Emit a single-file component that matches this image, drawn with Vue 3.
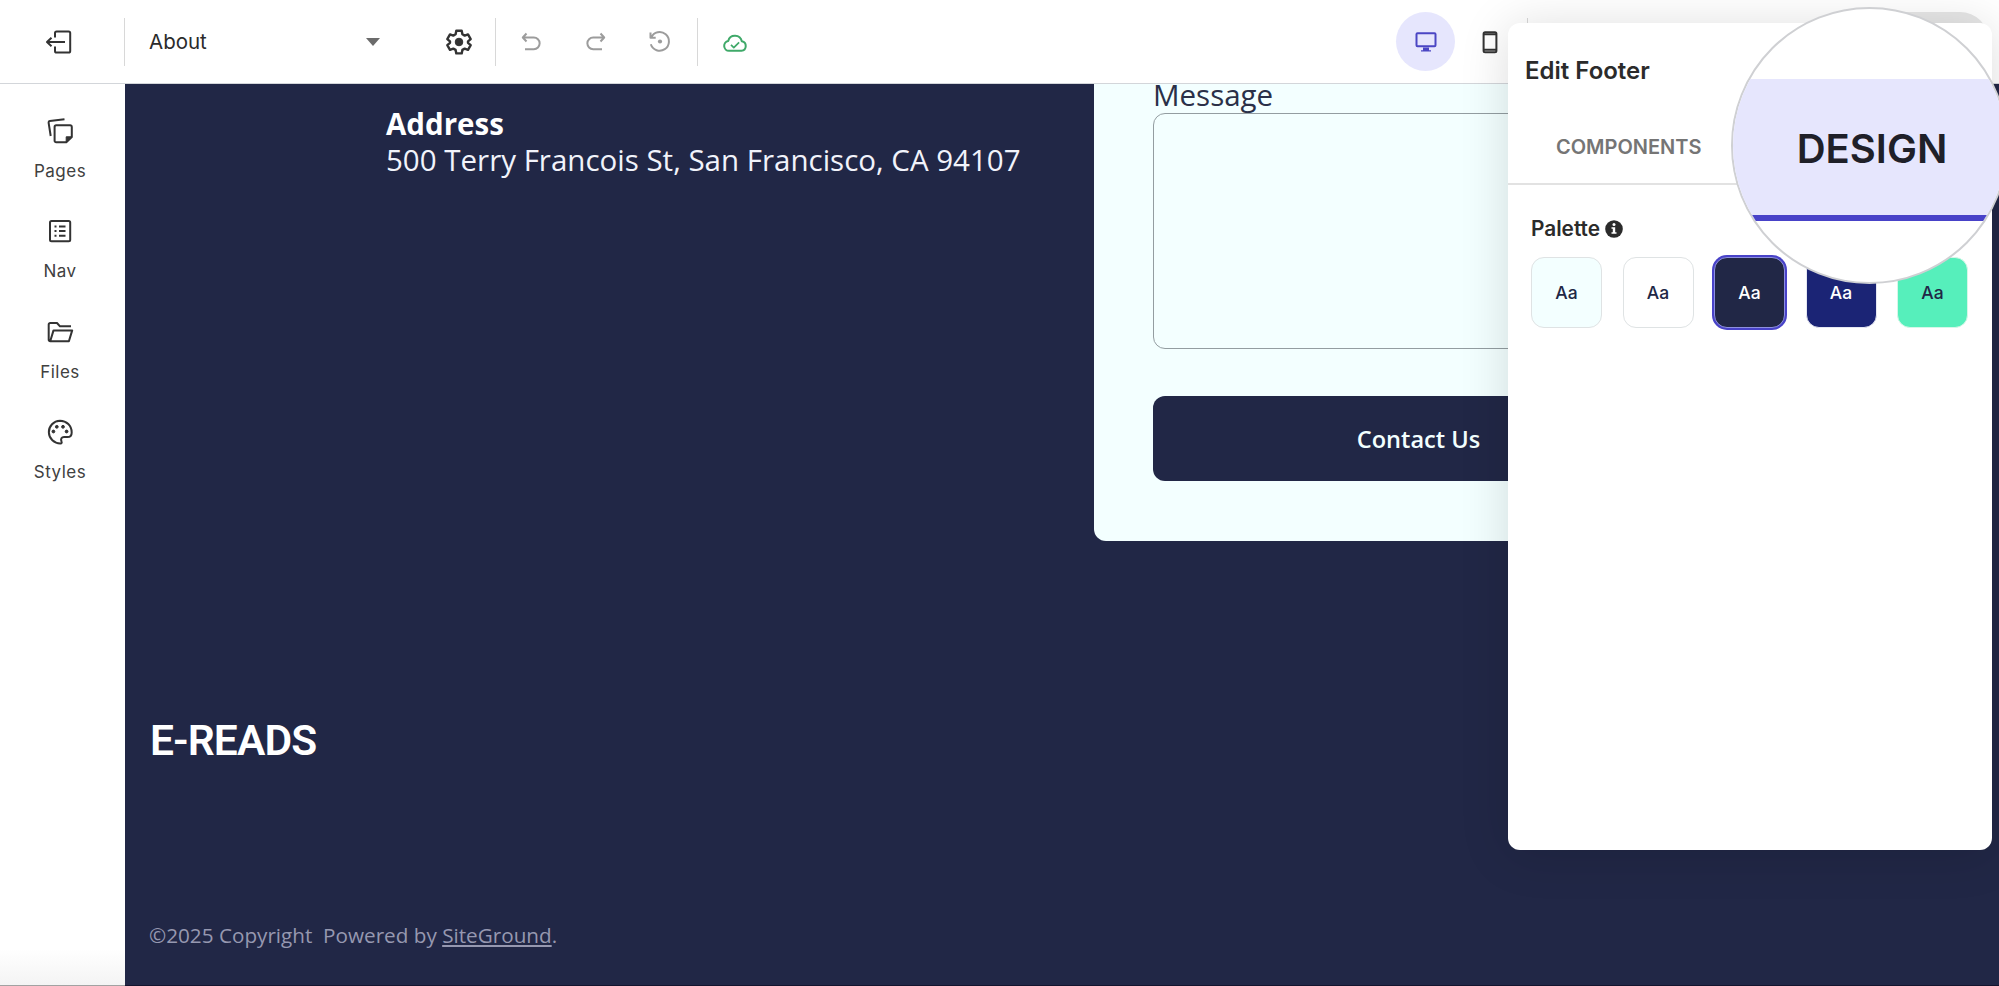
<script setup>
import { ref } from "vue";

const sidebarItems = [
  { id: "pages", label: "Pages" },
  { id: "nav", label: "Nav" },
  { id: "files", label: "Files" },
  { id: "styles", label: "Styles" },
];

const palette = ["mint", "white", "navy", "blue", "green"];
const selected = ref("navy");
const page = ref("About");
</script>

<template>
  <div class="editor">
    <header class="toolbar">
      <button class="tool exit">
        <svg viewBox="0 0 28 28" class="icon">
          <path d="M10 9.5V5a1.6 1.6 0 0 1 1.6-1.6h12A1.6 1.6 0 0 1 25.200 5v18a1.600 1.600 0 0 1-1.600 1.600h-12A1.600 1.600 0 0 1 10 23v-4.500M20 14H2.500M6.500 9.800 2 14l4.500 4.200" />
        </svg>
      </button>
      <span class="divider" />
      <button class="page-select">
        {{ page }}
        <span class="caret" />
      </button>
      <button class="tool settings">
        <svg viewBox="0 0 28 28" class="icon">
          <path d="m11.300 2.800-.7 3.500-2.300 1.300-3.300-1.200-2.700 4.700 2.700 2.300v1.400l-2.700 2.300 2.700 4.700 3.300-1.200 2.300 1.300.7 3.500h5.400l.7-3.500 2.300-1.300 3.300 1.200 2.700-4.700-2.700-2.300v-1.400l2.700-2.300-2.700-4.700-3.300 1.200-2.300-1.300-.7-3.500z" />
          <circle cx="14" cy="14" r="3.800" class="solid" />
        </svg>
      </button>
      <span class="divider" />
      <div class="history">
        <button class="tool">
          <svg viewBox="0 0 28 28" class="icon muted">
            <path d="M9.500 5.500 5.800 9.500l3.700 4M6.500 9.500h10.300a5.300 5.300 0 0 1 0 11.700H8" />
          </svg>
        </button>
        <button class="tool">
          <svg viewBox="0 0 28 28" class="icon muted">
            <path d="m18.500 5.500 3.700 4-3.700 4M21.500 9.500H11.200a5.300 5.300 0 0 0 0 11.700H20" />
          </svg>
        </button>
        <button class="tool">
          <svg viewBox="0 0 28 28" class="icon muted">
            <path d="M4.500 4.500v5.200h5.200M5.200 9.500a9.300 9.300 0 1 1-.4 6.800" />
            <circle cx="14" cy="13.500" r="2.100" class="solid" />
          </svg>
        </button>
      </div>
      <span class="divider" />
      <button class="tool saved">
        <svg viewBox="0 0 28 28" class="icon success">
          <path d="M8 22.800a5 5 0 0 1-.8-9.900 7 7 0 0 1 13.600.4 4.800 4.800 0 0 1-.4 9.500z" />
          <path d="m10 16.800 2.800 2.800 5.300-5.200" class="thin" />
        </svg>
      </button>
      <button class="tool device device-active">
        <svg viewBox="0 0 28 28" class="icon accent">
          <rect x="4.500" y="5.300" width="19" height="13" rx="1" />
          <path d="M11 19.500h6v2.800h2v1.200H9v-1.200h2z" class="solid" />
        </svg>
      </button>
      <button class="tool phone">
        <svg viewBox="0 0 28 28" class="icon">
          <rect x="7.600" y="4.200" width="12.800" height="20" rx="1.500" />
          <path d="M7.600 6.200h12.800M7.600 21.700h12.800" />
        </svg>
      </button>
      <span class="divider divider-last" />
      <button class="publish" aria-label="Publish" />
    </header>

    <div class="workspace">
      <nav class="sidebar">
        <a v-for="item in sidebarItems" :key="item.id" class="sidebar-item">
          <svg viewBox="0 0 28 28" class="icon">
            <template v-if="item.id === 'pages'">
              <path d="M4.700 19 2.600 5.600a1.400 1.400 0 0 1 1.200-1.500L18.500 2.300" />
              <path d="M10.200 8.300h14a1.600 1.600 0 0 1 1.600 1.600v10.200l-5.500 5.200H10.200a1.600 1.600 0 0 1-1.600-1.600V9.900a1.600 1.600 0 0 1 1.600-1.600z" />
              <path d="M25.800 19.800h-5.600v5.600z" class="solid" />
            </template>
            <template v-else-if="item.id === 'nav'">
              <rect x="4" y="4" width="20.200" height="20.200" rx="1.500" />
              <path d="M13 9.500h6.500M13 14.100h6.500M13 18.700h6.500M8.500 9.500h2M8.500 14.100h2M8.500 18.700h2" />
            </template>
            <template v-else-if="item.id === 'files'">
              <path d="M25 8.300H14L11 5H4.200A1.500 1.500 0 0 0 2.700 6.500v15.200A1.500 1.500 0 0 0 4.200 23.200h18.700l3.300-10.800H7.500L4.300 23" />
            </template>
            <template v-else>
              <path d="M14 2.700A11.400 11.400 0 1 0 14.500 25.500c1.200 0 1.500-1 1-2-1.200-2.700.2-4.500 2.500-4.500h3.500c2.500 0 4.200-1.800 4.200-4.600C25.700 7.500 20.500 2.700 14 2.700z" />
              <circle cx="7.400" cy="13.500" r="1.400" class="solid" />
              <circle cx="10.800" cy="8.800" r="1.400" class="solid" />
              <circle cx="17" cy="8.800" r="1.400" class="solid" />
              <circle cx="20.600" cy="13.500" r="1.400" class="solid" />
            </template>
          </svg>
          <span>{{ item.label }}</span>
        </a>
      </nav>

      <main class="canvas">
        <section class="contact">
          <div class="address">
            <strong>Address</strong>
            <span>500 Terry Francois St, San Francisco, CA 94107</span>
          </div>
          <form class="form">
            <label>Message</label>
            <div class="textarea" />
            <div class="submit">Contact Us</div>
          </form>
        </section>
        <div class="logo">E-READS</div>
        <div class="copyright">
          ©2025 Copyright&nbsp; Powered by <a>SiteGround</a>.
        </div>
      </main>
    </div>

    <aside class="panel">
      <h2>Edit Footer</h2>
      <div class="tabs">
        <span class="tab">COMPONENTS</span>
      </div>
      <div class="palette-title">
        Palette
        <svg viewBox="0 0 18 18" class="info">
          <circle cx="9" cy="9" r="8.800" fill="#2b2b2b" />
          <circle cx="9" cy="4.600" r="1.500" fill="#fff" />
          <path d="M6.500 7.300h3.700v5h1.300v1.500h-5v-1.500h1.300V8.800H6.500z" fill="#fff" />
        </svg>
      </div>
      <div class="swatches">
        <div
          v-for="color in palette"
          :key="color"
          :class="['swatch', `swatch-${color}`, { selected: selected === color }]"
        >
          Aa
        </div>
      </div>
    </aside>

    <div class="magnifier">
      <div class="magnified-tab">DESIGN</div>
    </div>
  </div>
</template>

<style>
body {
  overflow: hidden;
}
</style>

<style scoped>
.editor {
  position: relative;
  display: flex;
  flex-direction: column;
  width: 1999px;
  height: 986px;
  overflow: hidden;
  background: #fff;
  font-family: Inter, sans-serif;
  color: #2b2b2b;
}

button {
  padding: 0;
  border: 0;
  background: none;
  font: inherit;
  color: inherit;
}

.icon {
  display: block;
  flex: none;
  width: 28px;
  height: 28px;
  fill: none;
  stroke: #333;
  stroke-width: 2;
  stroke-linejoin: round;
}

.icon .solid {
  fill: #333;
  stroke-width: 1;
}

.icon .thin {
  stroke-width: 1.7;
}

.icon.muted {
  stroke: #9c9c9c;
}

.icon.muted .solid {
  fill: #9c9c9c;
  stroke: none;
}

.icon.success {
  stroke: #3fa969;
}

.icon.accent {
  stroke: #4b46c4;
}

.icon.accent .solid {
  fill: #4b46c4;
  stroke: none;
}

/* Toolbar */
.toolbar {
  display: flex;
  align-items: center;
  flex: none;
  box-sizing: border-box;
  height: 84px;
  border-bottom: 1px solid #d3d6da;
}

.tool {
  display: flex;
  align-items: center;
  justify-content: center;
  flex: none;
}

.exit {
  width: 124px;
  padding-right: 6px;
}

.divider {
  flex: none;
  width: 1px;
  height: 48px;
  background: #d8d8d8;
}

.page-select {
  display: flex;
  align-items: center;
  justify-content: space-between;
  width: 231px;
  margin-left: 24px;
  font-size: 20.500px;
}

.caret {
  border: 7px solid transparent;
  border-top: 8px solid #6b6b6b;
  border-bottom: 0;
}

.settings {
  margin: 0 22px 0 65px;
}

.settings .icon {
  stroke-width: 2.400;
}

.history {
  display: flex;
  gap: 36.500px;
  margin: 0 23px 0 21px;
}

.saved {
  margin-left: 23px;
}

.device {
  width: 59px;
  height: 59px;
  border-radius: 50%;
}

.device-active {
  margin-left: 647px;
  background: #e6e6fd;
}

.phone {
  margin-left: 21px;
}

.divider-last {
  margin-left: 23px;
}

.publish {
  align-self: flex-start;
  width: 150px;
  height: 58px;
  margin: 12px 0 0 311px;
  border-radius: 29px;
  background: #e6e6e6;
}

/* Sidebar */
.workspace {
  display: flex;
  flex: 1;
  min-height: 0;
}

.sidebar {
  display: flex;
  flex-direction: column;
  gap: 36.300px;
  flex: none;
  box-sizing: border-box;
  width: 125px;
  padding: 33px 5px 0 0;
  border-bottom: 1px solid #a2a2a2;
  background: linear-gradient(#fff 96%, #f4f4f4);
}

.sidebar-item {
  display: flex;
  flex-direction: column;
  align-items: center;
  gap: 16px;
  font-size: 17px;
  line-height: 20px;
  letter-spacing: 0.500px;
  color: #404040;
}

/* Site preview */
.canvas {
  display: flex;
  flex-direction: column;
  flex: 1;
  min-width: 0;
  overflow: hidden;
  border-bottom: 1px solid #14142e;
  background: #212746;
  font-family: "Open Sans", sans-serif;
}

.contact {
  display: flex;
  flex: none;
}

.address {
  display: flex;
  flex-direction: column;
  flex: none;
  width: 708px;
  margin: 22px 0 0 261px;
  font-size: 29.500px;
  line-height: 36px;
  color: #f1f3fb;
  white-space: nowrap;
}

.address strong {
  color: #fff;
}

.form {
  box-sizing: border-box;
  width: 649px;
  height: 481px;
  margin-top: -24px;
  padding: 17px 59px 0;
  border-radius: 12px;
  background: #f3ffff;
}

.form label {
  display: block;
  font-size: 29.500px;
  line-height: 36px;
  color: #2a3048;
}

.textarea {
  box-sizing: border-box;
  height: 236px;
  border: 1.500px solid #939da1;
  border-radius: 12px;
}

.submit {
  display: flex;
  align-items: center;
  justify-content: center;
  height: 85px;
  margin-top: 47px;
  border-radius: 12px;
  background: #212746;
  font-size: 23.600px;
  font-weight: 600;
  color: #f3ffff;
}

.logo {
  margin: 172px 0 0 25px;
  font-family: Roboto, sans-serif;
  font-size: 42.500px;
  font-weight: 600;
  line-height: 56px;
  letter-spacing: -0.900px;
  color: #fff;
}

.copyright {
  margin: 151px 0 0 24px;
  font-size: 20.700px;
  line-height: 30px;
  color: #9698b0;
}

.copyright a {
  text-decoration: underline;
}

/* Floating panel */
.panel {
  position: absolute;
  top: 23px;
  left: 1508px;
  width: 484px;
  height: 827px;
  border-radius: 12px;
  background: #fff;
  box-shadow: 0 4px 50px rgba(0, 0, 0, 0.14);
}

.panel h2 {
  margin: 32px 0 0 17px;
  font-size: 24px;
  font-weight: 600;
  line-height: 32px;
}

.tabs {
  display: flex;
  align-items: center;
  box-sizing: border-box;
  height: 98px;
  padding: 24px 0 0 48px;
  border-bottom: 2px solid #e2e2e2;
}

.tab {
  font-size: 20px;
  font-weight: 600;
  color: #757575;
}

.palette-title {
  display: flex;
  align-items: center;
  gap: 5px;
  margin: 29px 0 0 23px;
  font-size: 20.800px;
  font-weight: 600;
  line-height: 30px;
}

.info {
  width: 18px;
  height: 18px;
}

.swatches {
  display: flex;
  gap: 20.500px;
  margin: 13px 0 0 23px;
}

.swatch {
  display: flex;
  align-items: center;
  justify-content: center;
  box-sizing: border-box;
  width: 71px;
  height: 71px;
  border: 1.500px solid #dfe3e4;
  border-radius: 13px;
  font-size: 17.500px;
  font-weight: 500;
  color: #212746;
}

.swatch-mint {
  background: #f3ffff;
}

.swatch-navy {
  background: #212746;
  color: #fff;
}

.swatch-blue {
  border-color: #e5e7f2;
  background: #1b2475;
  color: #fff;
}

.swatch-green {
  border-color: #d5f7e8;
  background: #56efbb;
}

.swatch.selected {
  border: 1px solid #8d8fe0;
  box-shadow: 0 0 0 2px #4842c8;
}

/* Magnifier */
.magnifier {
  position: absolute;
  top: 7px;
  left: 1731px;
  box-sizing: border-box;
  width: 277px;
  height: 277px;
  padding-top: 70px;
  border: 2px solid #cfd0d3;
  border-radius: 50%;
  background: #fff;
  overflow: hidden;
}

.magnified-tab {
  display: flex;
  align-items: center;
  justify-content: center;
  box-sizing: border-box;
  height: 142px;
  padding: 2px 0 0 5px;
  border-bottom: 6px solid #4842c8;
  background: #e6e6fd;
  font-size: 40px;
  font-weight: 600;
  color: #1f2029;
}
</style>
